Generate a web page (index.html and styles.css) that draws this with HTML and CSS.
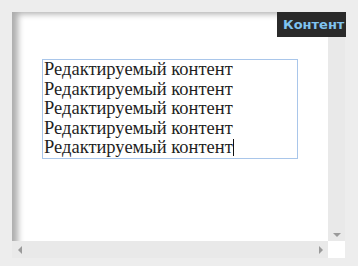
FILE: index.html
```html
<!DOCTYPE html>
<html lang="ru">
<head>
<meta charset="utf-8">
<link rel="stylesheet" href="styles.css">
</head>
<body>
<div class="frame">
  <div class="view">
    <div class="editable" contenteditable="true">Редактируемый контент<br>Редактируемый контент<br>Редактируемый контент<br>Редактируемый контент<br>Редактируемый контент<span class="caret"></span></div>
  </div>
  <div class="vscroll"><span class="arrow-down"></span></div>
  <div class="hscroll"><span class="arrow-left"></span><span class="arrow-right"></span></div>
  <div class="corner"></div>
  <div class="label">Контент</div>
</div>
</body>
</html>
```
FILE: styles.css
```css
html, body {
  margin: 0;
  padding: 0;
  background: #ededed;
  width: 358px;
  height: 266px;
  overflow: hidden;
}
body {
  padding: 12px 0 0 12px;
  box-sizing: border-box;
}
.frame {
  position: relative;
  display: grid;
  grid-template-columns: 316px 17px;
  grid-template-rows: 229px 17px;
  width: 333px;
}
.view {
  background: #fff;
  box-shadow: inset 9px 5px 6px -3px rgba(0, 0, 0, 0.32);
  padding: 47px 0 0 30px;
  box-sizing: border-box;
}
.editable {
  width: 256px;
  height: 100px;
  box-sizing: border-box;
  border: 1px solid #a9c6ea;
  padding: 0 0 0 1px;
  font-family: "Liberation Serif", "Times New Roman", serif;
  font-size: 18.5px;
  line-height: 19.5px;
  color: #1f1f1f;
  outline: none;
  white-space: nowrap;
}
.caret {
  display: inline-block;
  width: 1px;
  height: 17px;
  background: #111;
  vertical-align: -3px;
}
.vscroll {
  background: #e9e9e9;
  display: flex;
  align-items: flex-end;
  justify-content: center;
  padding-bottom: 4px;
  box-sizing: border-box;
}
.arrow-down {
  width: 0;
  height: 0;
  border-left: 4px solid transparent;
  border-right: 4px solid transparent;
  border-top: 4px solid #9a9a9a;
}
.hscroll {
  background: #e9e9e9;
  display: flex;
  align-items: center;
  justify-content: space-between;
  padding: 0 5px 0 6px;
}
.arrow-left {
  width: 0;
  height: 0;
  border-top: 4px solid transparent;
  border-bottom: 4px solid transparent;
  border-right: 4px solid #9a9a9a;
}
.arrow-right {
  width: 0;
  height: 0;
  border-top: 4px solid transparent;
  border-bottom: 4px solid transparent;
  border-left: 4px solid #9a9a9a;
}
.corner {
  background: #fff;
}
.label {
  position: absolute;
  top: 0;
  left: 265px;
  width: 69px;
  height: 25px;
  background: #2a2a2a;
  color: #7fc3f0;
  font-family: "DejaVu Sans", Verdana, sans-serif;
  font-weight: 700;
  font-size: 13px;
  line-height: 25px;
  padding-left: 6px;
  box-sizing: border-box;
  white-space: nowrap;
  overflow: hidden;
}
```
